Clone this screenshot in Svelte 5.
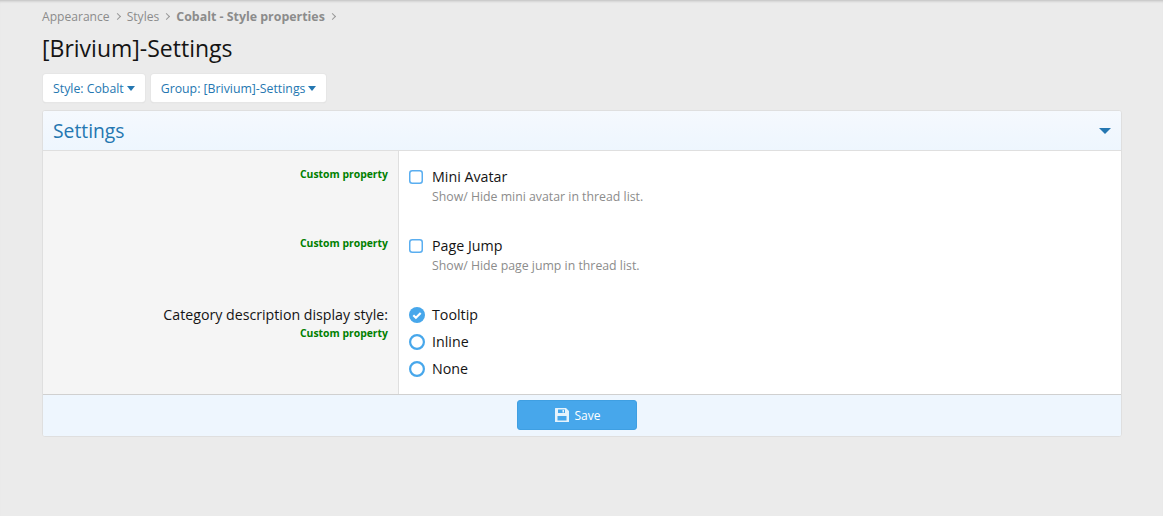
<script>
  let checks = [
    { label: 'Mini Avatar', hint: 'Show/ Hide mini avatar in thread list.' },
    { label: 'Page Jump', hint: 'Show/ Hide page jump in thread list.' }
  ]
  let radios = [
    { label: 'Tooltip', on: true },
    { label: 'Inline', on: false },
    { label: 'None', on: false }
  ]
</script>

<div class="page">
  <nav class="crumbs">
    <span>Appearance</span><i class="sep"></i>
    <span>Styles</span><i class="sep"></i>
    <b>Cobalt - Style properties</b><i class="sep"></i>
  </nav>
  <h1 class="title">[Brivium]-Settings</h1>
  <div class="filters">
    <button class="filter">Style: Cobalt<i class="caret"></i></button>
    <button class="filter">Group: [Brivium]-Settings<i class="caret"></i></button>
  </div>

  <section class="block">
    <header class="block-head">
      <h2>Settings</h2>
      <i class="head-caret"></i>
    </header>

    {#each checks as c}
      <div class="row check-row">
        <div class="term"><div class="custom">Custom property</div></div>
        <div class="field">
          <label class="choice">
            <svg class="radio" width="14" height="14" viewBox="0 0 14 14"><rect x=".75" y=".75" width="12.5" height="12.5" rx="2.500" fill="#fff" stroke="#5aaef0" stroke-width="1.500"/></svg>
            <span>{c.label}</span>
          </label>
          <div class="hint">{c.hint}</div>
        </div>
      </div>
    {/each}

    <div class="row radio-row">
      <div class="term">
        <div class="term-label">Category description display style:</div>
        <div class="custom">Custom property</div>
      </div>
      <div class="field radios">
        {#each radios as r}
          <label class="choice">
            {#if r.on}
              <svg class="radio" width="16" height="16" viewBox="0 0 16 16"><circle cx="8" cy="8" r="8" fill="#47a7eb"/><path d="M4.300 8.200l2.600 2.600 4.800-4.900" fill="none" stroke="#fff" stroke-width="2.100"/></svg>
            {:else}
              <svg class="radio" width="16" height="16" viewBox="0 0 16 16"><circle cx="8" cy="8" r="6.900" fill="#fff" stroke="#47a7eb" stroke-width="2.200"/></svg>
            {/if}
            <span>{r.label}</span>
          </label>
        {/each}
      </div>
    </div>

    <footer class="block-foot">
      <button class="save">
        <svg width="16" height="16" viewBox="0 0 16 16"><path fill-rule="evenodd" fill="#e6f3fc" d="M1.500 1H12l3 3v10.500a.5.5 0 0 1-.5.5h-13a.5.5 0 0 1-.5-.5v-13A.5.5 0 0 1 1.500 1zM4 2.500V6h7V2.500zM8.500 3h1.500v2.500H8.500zM3.500 9v4.500h9V9z"/></svg>
        Save
      </button>
    </footer>
  </section>
</div>

<style>
  :global(body) { background: #ebebeb; }
  .page {
    min-height: 516px; box-sizing: border-box; padding: 7px 41px 0 42px;
    font-family: "Open Sans", "Noto Sans", sans-serif; color: #141414;
    box-shadow: inset 0 3px 3px -2px rgba(0,0,0,0.2);
  }
  .crumbs { display: flex; align-items: center; height: 18px; font-size: 12.1px; color: #8c8c8c; }
  .crumbs b { font-weight: 700; font-size: 12.4px; }
  .sep { width: 4px; height: 4px; margin: 0 7px 0 5px; border-top: 1px solid #999; border-right: 1px solid #999; transform: rotate(45deg); }
  .title { margin: 8px 0 0 0; height: 33px; font-size: 23px; line-height: 30px; font-weight: 400; }
  .filters { display: flex; gap: 6px; margin: 8px 0 0 1px; }
  .filter {
    height: 28px; padding: 0 10px; background: #fff; border: 0; border-radius: 3px;
    box-shadow: 0 0 0 1px #e6e6e6, 0 1px 1px #cfcfcf; color: #2577b1; font: 12.3px "Open Sans", sans-serif;
    display: flex; align-items: center;
  }
  .caret { margin: 1px 0 0 3px; border: 4.500px solid transparent; border-top: 5px solid #2577b1; border-bottom: 0; }
  .block { margin: 8px 0 0 0; background: #fff; border: 1px solid #dfdfdf; border-radius: 3px; box-sizing: border-box; height: 327px; display: flex; flex-direction: column; overflow: hidden; }
  .block-head {
    height: 39px; flex: none; display: flex; align-items: center; justify-content: space-between; padding: 0 10px;
    background: linear-gradient(#f5f9fe, #eef6fe); border-bottom: 1px solid #dfdfdf;
  }
  .block-head h2 { margin: 0; font-size: 19.300px; font-weight: 400; color: #2577b1; }
  .head-caret { border: 6px solid transparent; border-top: 6px solid #2577b1; border-bottom: 0; }
  .row { display: grid; grid-template-columns: 356px 1fr; }
  .check-row { height: 69px; }
  .radio-row { flex: 1; }
  .term { background: #f5f5f5; border-right: 1px solid #dfdfdf; padding: 15px 10px 0 10px; text-align: right; }
  .radio-row .term { padding-top: 16px; }
  .custom { font-size: 10.4px; font-weight: 700; color: #008000; line-height: 16px; }
  .term-label { font-size: 14.200px; line-height: 20px; }
  .field { padding: 16px 10px 0 10px; }
  .radios { padding-top: 16px; display: flex; flex-direction: column; gap: 7px; }
  .choice { display: flex; align-items: center; gap: 7px; font-size: 14.250px; line-height: 20px; }
  .check-row .choice { gap: 9px; }
  .radio { flex: none; }
  .hint { margin: 2px 0 0 23px; font-size: 12.300px; line-height: 16px; color: #8c8c8c; }
  .block-foot {
    height: 42px; flex: none; box-sizing: border-box; border-top: 1px solid #d0d0d0; background: #eef6fe;
    display: flex; align-items: flex-start; justify-content: center; padding: 5px 10px 0 0;
  }
  .save {
    width: 120px; height: 30px; background: #47a7eb; border: 1px solid #3f9fe2; border-radius: 3px; color: #fff;
    font: 12px "Open Sans", sans-serif; display: flex; align-items: center; justify-content: center; gap: 5px;
  }
</style>
